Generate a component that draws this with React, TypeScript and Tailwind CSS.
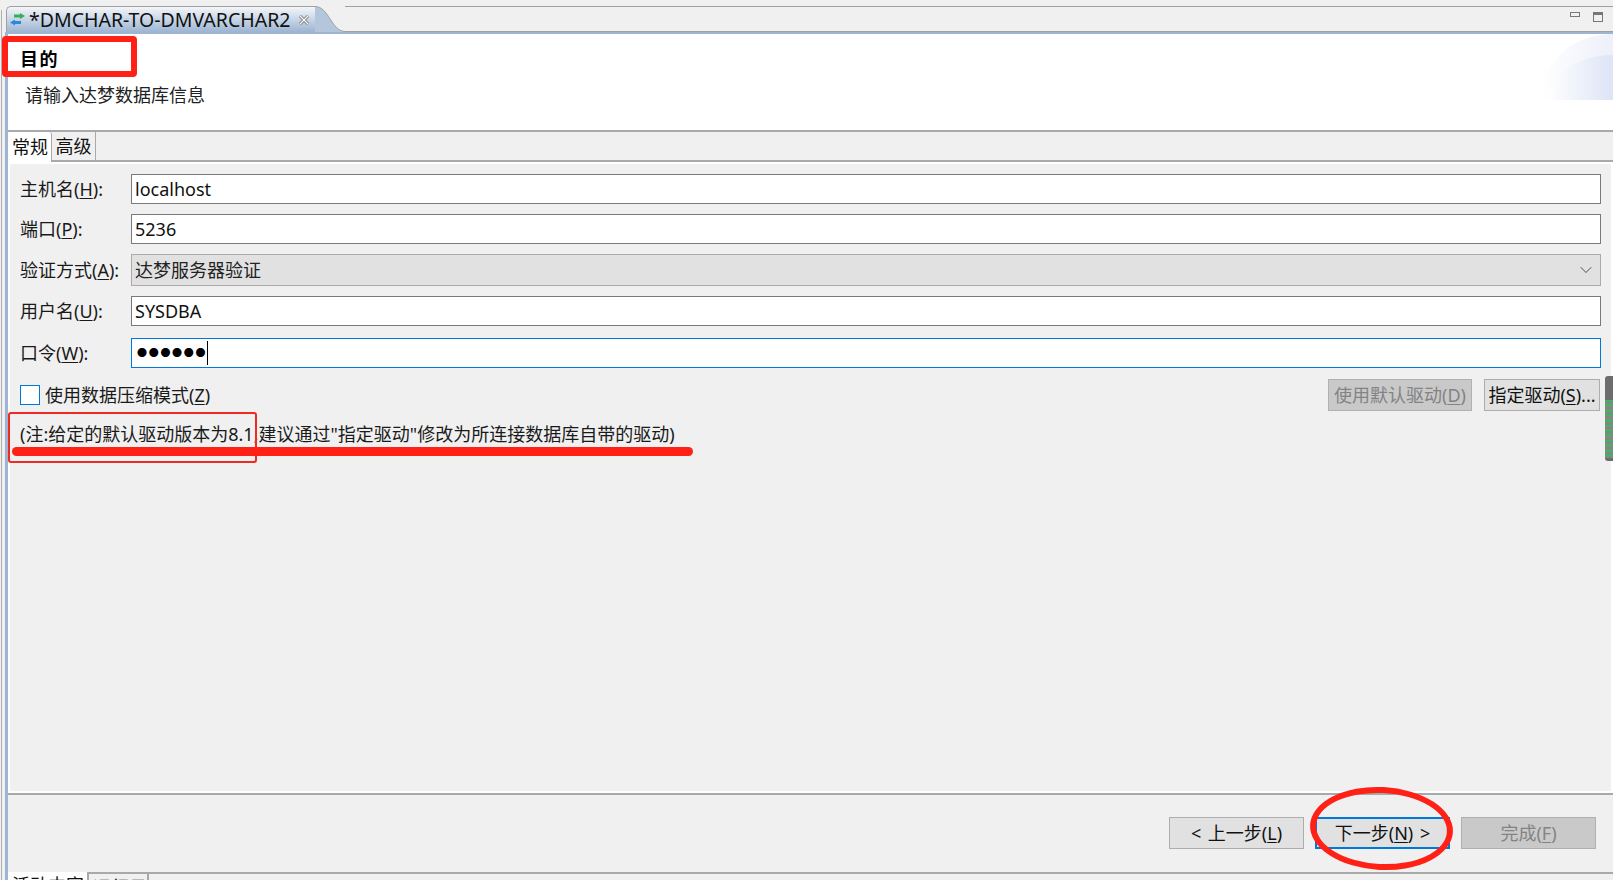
import { ChevronDown } from 'lucide-react';

const font = "font-['Noto_Sans','Noto_Sans_CJK_SC',sans-serif]";

function Label({ text, mnemonic, tail = '):' }: { text: string; mnemonic: string; tail?: string }) {
  return (
    <span className="whitespace-nowrap text-[18px] leading-[24px] text-[#1a1a1a]">
      {text}(<span className="underline underline-offset-2">{mnemonic}</span>{tail}
    </span>
  );
}

function Row({ label, mnemonic, mb, children }: { label: string; mnemonic: string; mb: string; children: React.ReactNode }) {
  return (
    <div className={`flex items-center ${mb}`}>
      <div className="w-[111px] shrink-0">
        <Label text={label} mnemonic={mnemonic} />
      </div>
      {children}
    </div>
  );
}

function Input({ value }: { value: string }) {
  return (
    <div className="flex h-[30px] w-[1470px] items-center border border-[#7a7a7a] bg-white pl-[3px] text-[18px] text-[#111]">
      {value}
    </div>
  );
}

function WizardButton({ className, children }: { className: string; children: React.ReactNode }) {
  return (
    <div className={`flex h-[32px] items-center justify-center border text-[18px] whitespace-nowrap ${className}`}>
      {children}
    </div>
  );
}

export default function App() {
  return (
    <div className={`${font} relative h-[880px] w-[1613px] overflow-hidden bg-[#f0f0f0]`}>
      {/* editor tab strip */}
      <div className="flex h-[32px] pt-[6px] pl-[1px]">
        <div className="mt-[4px] mr-[4px] w-px shrink-0 bg-[#b0b0b0]" />
        <div className="flex h-[26px] flex-1 items-stretch">
          <div className="flex w-[309px] shrink-0 items-center rounded-tl-[5px] border-t border-l border-[#a0a0a0] bg-gradient-to-b from-[#f4f6f9] to-[#9db5d2] pl-[2px]">
            <svg width="17" height="13" viewBox="0 0 17 13" className="shrink-0">
              <path d="M5 1.500h6V0l5 3-5 3V4.500H5Z" fill="#35b04f" />
              <path d="M12 8H6V6.500L1 9.500l5 3V11h6Z" fill="#2f86e0" />
            </svg>
            <span className="ml-[3px] text-[19.5px] leading-[24px] whitespace-nowrap text-[#111]">*DMCHAR-TO-DMVARCHAR2</span>
            <svg width="12" height="12" viewBox="0 0 12 12" className="ml-[8px] shrink-0">
              <path d="M2 2l8 8M10 2l-8 8" stroke="#6f6f6f" strokeWidth="3" />
              <path d="M2 2l8 8M10 2l-8 8" stroke="#fff" strokeWidth="1.200" />
            </svg>
          </div>
          <svg width="30" height="26" viewBox="0 0 30 26" className="shrink-0">
            <path d="M0 0.500C14 0.500 16 25 30 25.500V26H0Z" fill="#b4c6dc" />
            <path d="M0 0.500C14 0.500 16 25 30 25.500" fill="none" stroke="#a0a0a0" />
          </svg>
          <div className="flex flex-1 justify-end gap-[13px] border-t border-b border-[#a0a0a0] pt-[5px] pr-[10px]">
            <div className="h-[5px] w-[10px] border border-[#777]" />
            <div className="h-[10px] w-[10px] border border-t-[3px] border-[#777]" />
          </div>
        </div>
      </div>

      <div className="flex h-[848px]">
        <div className="mr-[3px] ml-[1px] w-px shrink-0 bg-[#b0b0b0]" />
        <div className="w-[3px] shrink-0 bg-[#9db5d2]" />
        <div className="flex min-w-0 flex-1 flex-col">
          <div className="h-[2px] shrink-0 bg-[#9db5d2]" />

          {/* wizard title area */}
          <div className="relative h-[98px] shrink-0 border-b-2 border-[#a9a9a9] bg-white">
            <div className="pt-[12px] pl-[12px] text-[18px] leading-[26px] font-bold tracking-[1.5px] text-black">目的</div>
            <div className="pt-[10px] pl-[17px] text-[18px] leading-[26px] text-[#222]">请输入达梦数据库信息</div>
            <div className="absolute top-0 right-0 h-[66px] w-[73px] rounded-tl-[100%] bg-gradient-to-r from-white to-[#edf0fa]" />
            <div className="absolute top-[21px] right-0 h-[45px] w-[66px] rounded-tl-[100%] bg-gradient-to-r from-white to-[#dde4f6]" />
          </div>

          {/* tabs */}
          <div className="flex h-[30px] shrink-0 border-b-2 border-[#a9a9a9]">
            <div className="-mb-[2px] flex h-[30px] w-[44px] items-center justify-center rounded-tr-[3px] border-r border-[#a9a9a9] bg-white pt-[1px] pl-[1px] text-[18px] text-[#111]">常规</div>
            <div className="flex w-[44px] items-center justify-center border-r border-[#a9a9a9] pt-[1px] text-[18px] text-[#111]">高级</div>
          </div>

          {/* form */}
          <div className="h-[631px] shrink-0 border-2 border-white pt-[10px] pl-[10px]">
            <Row label="主机名" mnemonic="H" mb="mb-[10px]"><Input value="localhost" /></Row>
            <Row label="端口" mnemonic="P" mb="mb-[10px]"><Input value="5236" /></Row>
            <Row label="验证方式" mnemonic="A" mb="mb-[10px]">
              <div className="flex h-[32px] w-[1470px] items-center justify-between border border-[#ababab] bg-[#e1e1e1] pr-[4px] pl-[3px] text-[18px] text-[#222]">
                达梦服务器验证
                <ChevronDown size={20} strokeWidth={1} className="text-[#333]" />
              </div>
            </Row>
            <Row label="用户名" mnemonic="U" mb="mb-[12px]"><Input value="SYSDBA" /></Row>
            <Row label="口令" mnemonic="W" mb="mb-[11px]">
              <div className="flex h-[30px] w-[1470px] items-center border border-[#0078d7] bg-white pl-[5px] text-[10px] tracking-[1.7px] text-black">
                ●●●●●●<span className="h-[24px] w-px bg-black" />
              </div>
            </Row>

            <div className="flex h-[32px] items-center">
              <div className="h-[20px] w-[20px] border border-[#0078d7] bg-white" />
              <div className="ml-[5px] flex-1"><Label text="使用数据压缩模式" mnemonic="Z" tail=")" /></div>
              <WizardButton className="mr-[12px] w-[144px] border-[#b0b0b0] bg-[#c9c9c9] text-[#838383]">
                <span>使用默认驱动(<span className="underline underline-offset-2">D</span>)</span>
              </WizardButton>
              <WizardButton className="mr-[11px] w-[116px] border-[#adadad] bg-[#e1e1e1] text-[#111]">
                <span>指定驱动(<span className="underline underline-offset-2">S</span>)...</span>
              </WizardButton>
            </div>

            <div className="pt-[11px] text-[18px] leading-[24px] whitespace-nowrap text-[#1a1a1a]">
              (注:给定的默认驱动版本为8.1,建议通过"指定驱动"修改为所连接数据库自带的驱动)
            </div>
          </div>

          {/* wizard buttons */}
          <div className="h-[79px] shrink-0 border-t-2 border-[#a9a9a9]">
            <div className="flex justify-end gap-[11px] pt-[22px] pr-[17px]">
              <WizardButton className="w-[135px] border-[#adadad] bg-[#e1e1e1] text-[#111]">
                <span><span className="mr-[2px]">&lt;</span> 上一步(<span className="underline underline-offset-2">L</span>)</span>
              </WizardButton>
              <WizardButton className="w-[135px] border-2 border-[#0078d7] bg-[#e1e1e1] text-[#111]">
                <span>下一步(<span className="underline underline-offset-2">N</span>) <span className="ml-[2px]">&gt;</span></span>
              </WizardButton>
              <WizardButton className="w-[135px] border-[#b0b0b0] bg-[#c9c9c9] text-[#838383]">
                <span>完成(<span className="underline underline-offset-2">F</span>)</span>
              </WizardButton>
            </div>
          </div>

          {/* bottom view tabs, cut off by the screenshot */}
          <div className="flex h-[30px] shrink-0 border-t-2 border-[#a9a9a9] text-[18px] whitespace-nowrap text-[#111]">
            <div className="-mt-[2px] w-[79px] bg-white pl-[4px]">活动内容</div>
            <div className="-mt-[2px] w-[62px] overflow-hidden border-x-2 border-t-2 border-[#a9a9a9] pl-[4px]">运行日志</div>
          </div>
        </div>
      </div>

      {/* green scroll marker on the right edge */}
      <div className="absolute top-[376px] right-0 h-[85px] w-[8px] overflow-hidden rounded-l-[3px] bg-[#6c6c6c] pt-[24px]">
        <div className="h-[58px] bg-[repeating-linear-gradient(to_bottom,#19d04f_0,#19d04f_1px,#7d8a80_1px,#7d8a80_5px)]" />
      </div>

      {/* red annotations */}
      <div className="absolute top-[36px] left-[2px] h-[41px] w-[135px] rounded-[4px] border-[6px] border-[#ff2116]" />
      <div className="absolute top-[412px] left-[8px] h-[51px] w-[249px] rounded-[3px] border-2 border-[#f02a22]" />
      <div className="absolute top-[447px] left-[12px] h-[9px] w-[681px] rounded-full bg-[#ff2116]" />
      <div className="absolute top-[787px] left-[1310px] h-[83px] w-[143px] rotate-[3deg] rounded-[50%] border-[6px] border-[#ff2116]" />
    </div>
  );
}
